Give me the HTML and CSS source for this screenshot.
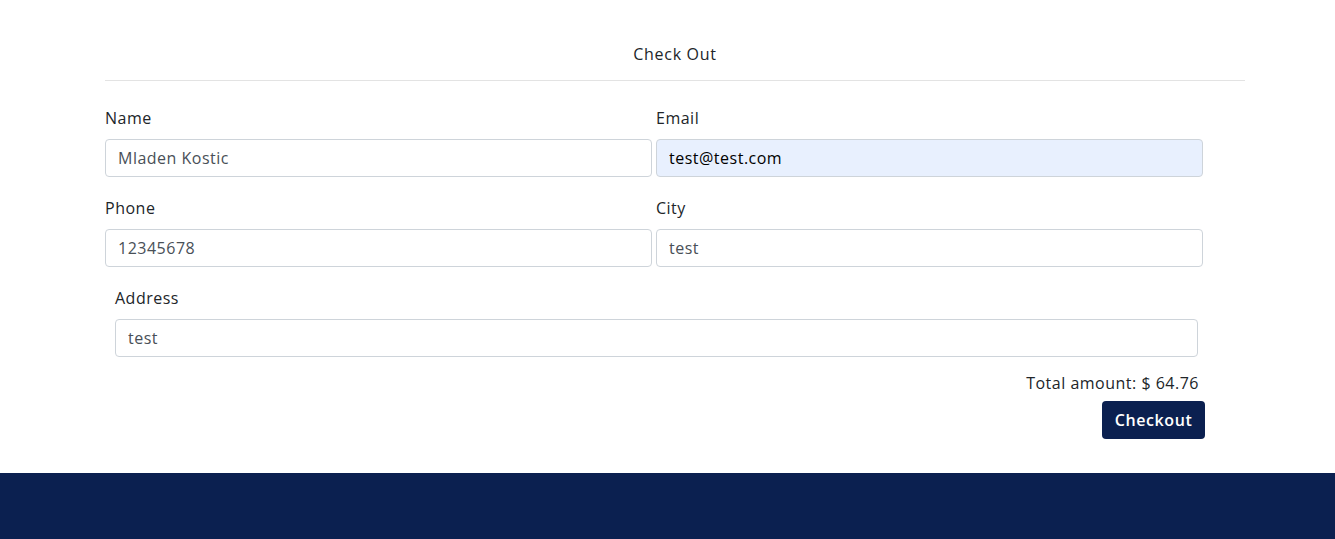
FILE: index.html
```html
<!DOCTYPE html>
<html>
<head>
<meta charset="utf-8">
<link rel="stylesheet" href="styles.css">
</head>
<body>
<main class="checkout">
  <h1 class="title">Check Out</h1>
  <hr class="divider">
  <form class="form">
    <div class="row">
      <div class="group">
        <label class="label">Name</label>
        <input class="input" type="text" value="Mladen Kostic">
      </div>
      <div class="group">
        <label class="label">Email</label>
        <input class="input input-autofill" type="text" value="test@test.com">
      </div>
    </div>
    <div class="row">
      <div class="group">
        <label class="label">Phone</label>
        <input class="input" type="text" value="12345678">
      </div>
      <div class="group">
        <label class="label">City</label>
        <input class="input" type="text" value="test">
      </div>
    </div>
    <div class="group group-address">
      <label class="label">Address</label>
      <input class="input" type="text" value="test">
    </div>
    <div class="summary">
      <div class="total">Total amount: $ 64.76</div>
      <button class="btn" type="button">Checkout</button>
    </div>
  </form>
</main>
<footer class="footer"></footer>
</body>
</html>
```
FILE: styles.css
```css
* { box-sizing: border-box; }
html, body { margin: 0; padding: 0; }
body {
  font-family: "Open Sans", "Noto Sans", sans-serif;
  font-size: 16px;
  letter-spacing: 0.5px;
  color: #212529;
  background: #fff;
  overflow: hidden;
}
.checkout {
  width: 1140px;
  margin-left: 105px;
  padding-top: 42px;
  padding-bottom: 34px;
}
.title {
  margin: 0;
  font-size: 16px;
  font-weight: 400;
  line-height: 24px;
  text-align: center;
  letter-spacing: 0.7px;
}
.divider {
  margin: 14px 0 25px;
  border: 0;
  border-top: 1px solid #e3e3e3;
}
.form { width: 1098px; }
.row {
  display: flex;
  gap: 4px;
}
.row .group { flex: 1; }
.group { margin-bottom: 19px; }
.label {
  display: block;
  line-height: 24px;
  margin-bottom: 9px;
}
.input {
  display: block;
  width: 100%;
  height: 38px;
  padding: 0 12px;
  font-family: inherit;
  font-size: 16px;
  letter-spacing: 0.5px;
  color: #495057;
  background: #fff;
  border: 1px solid #ced4da;
  border-radius: 4px;
  outline: none;
}
.input-autofill {
  background: #e8f0fe;
  color: #000;
}
.group-address {
  margin-left: 10px;
  width: 1083px;
  margin-bottom: 14px;
}
.summary {
  display: flex;
  flex-direction: column;
  align-items: flex-end;
  gap: 6px;
  width: 1100px;
}
.total {
  line-height: 24px;
  color: #212529;
  margin-right: 6px;
}
.btn {
  height: 38px;
  width: 103px;
  font-family: inherit;
  font-size: 16px;
  font-weight: 600;
  letter-spacing: 0.6px;
  color: #fff;
  background: #0b2050;
  border: 0;
  border-radius: 4px;
}
.footer {
  height: 70px;
  background: #0b2050;
}
```
